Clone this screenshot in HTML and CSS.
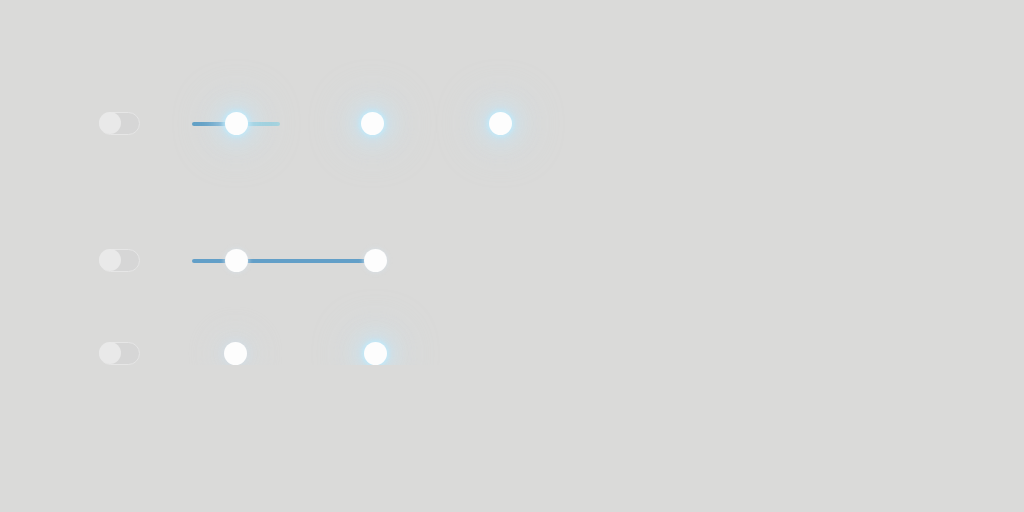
FILE: index.html
```html
<!DOCTYPE html>
<html lang="en">
<head>
    <meta charset="UTF-8">
    <meta name="viewport" content="width=device-width, initial-scale=1.0">
    <title>Controls</title>
    <link rel="stylesheet" href="styles.css">
</head>
<body>
    <div class="panel">
        <div class="row row-first">
            <div class="toggle"><span class="knob"></span></div>
            <div class="slider slider-short">
                <span class="fill"></span>
                <span class="rest"></span>
                <span class="thumb glow" style="left: 44px"></span>
            </div>
            <span class="dot glow dot-a"></span>
            <span class="dot glow dot-b"></span>
        </div>

        <div class="row row-second">
            <div class="toggle"><span class="knob"></span></div>
            <div class="slider slider-range">
                <span class="fill full"></span>
                <span class="thumb soft" style="left: 44px"></span>
                <span class="thumb soft" style="left: 183px"></span>
            </div>
        </div>

        <div class="row row-third">
            <div class="toggle"><span class="knob"></span></div>
            <span class="dot faint dot-c"></span>
            <span class="dot glow dot-d"></span>
        </div>
    </div>
</body>
</html>
```

FILE: styles.css
```css
body {
    margin: 0;
    background: #dadad9;
    font-family: "Liberation Sans", Arial, sans-serif;
}
.panel {
    padding: 111px 0 0 99px;
}
.row {
    display: flex;
    align-items: center;
    height: 24px;
}
.row-second {
    margin-top: 113px;
}
.row-third {
    margin-top: 69px;
}

/* toggle switch, off state */
.toggle {
    width: 41px;
    height: 23px;
    box-sizing: border-box;
    border: 1.5px solid #e6e6e6;
    border-radius: 12px;
    background: #d6d6d6;
    display: flex;
    align-items: center;
}
.knob {
    width: 22px;
    height: 22px;
    margin-left: -1.5px;
    border-radius: 50%;
    background: #e9e9e9;
}

/* sliders */
.slider {
    position: relative;
    height: 4px;
    margin: 2px 0 0 52px;
    display: flex;
}
.slider-short {
    width: 88px;
}
.slider-range {
    width: 183px;
}
.fill {
    height: 4px;
    width: 44px;
    border-radius: 2px 0 0 2px;
    background: #5d9dc4;
}
.fill.full {
    width: 183px;
    border-radius: 2px;
    background: #629fc8;
}
.rest {
    flex: 1;
    height: 4px;
    border-radius: 0 2px 2px 0;
    background: linear-gradient(to right, #7fc3d8, #a6d3de);
}
.thumb {
    position: absolute;
    top: -10px;
    width: 23px;
    height: 23px;
    margin-left: -11.5px;
    border-radius: 50%;
    background: #fdfdfd;
}

/* glowing dots */
.dot {
    width: 23px;
    height: 23px;
    border-radius: 50%;
    background: #fdfdfd;
}
.glow {
    box-shadow: 0 0 5px 2px rgba(190, 234, 252, 0.9), 0 0 18px 8px rgba(198, 230, 245, 0.55), 0 0 36px 16px rgba(210, 228, 238, 0.35);
}
.faint {
    box-shadow: 0 0 8px 3px rgba(208, 224, 234, 0.6), 0 0 28px 12px rgba(212, 222, 230, 0.3);
}
.soft {
    box-shadow: 0 0 4px 1px rgba(215, 225, 232, 0.7);
}
.dot-a {
    margin-left: 80.5px;
}
.dot-b {
    margin-left: 105px;
}
.dot-c {
    margin-left: 83.5px;
}
.dot-d {
    margin-left: 117px;
}
```
